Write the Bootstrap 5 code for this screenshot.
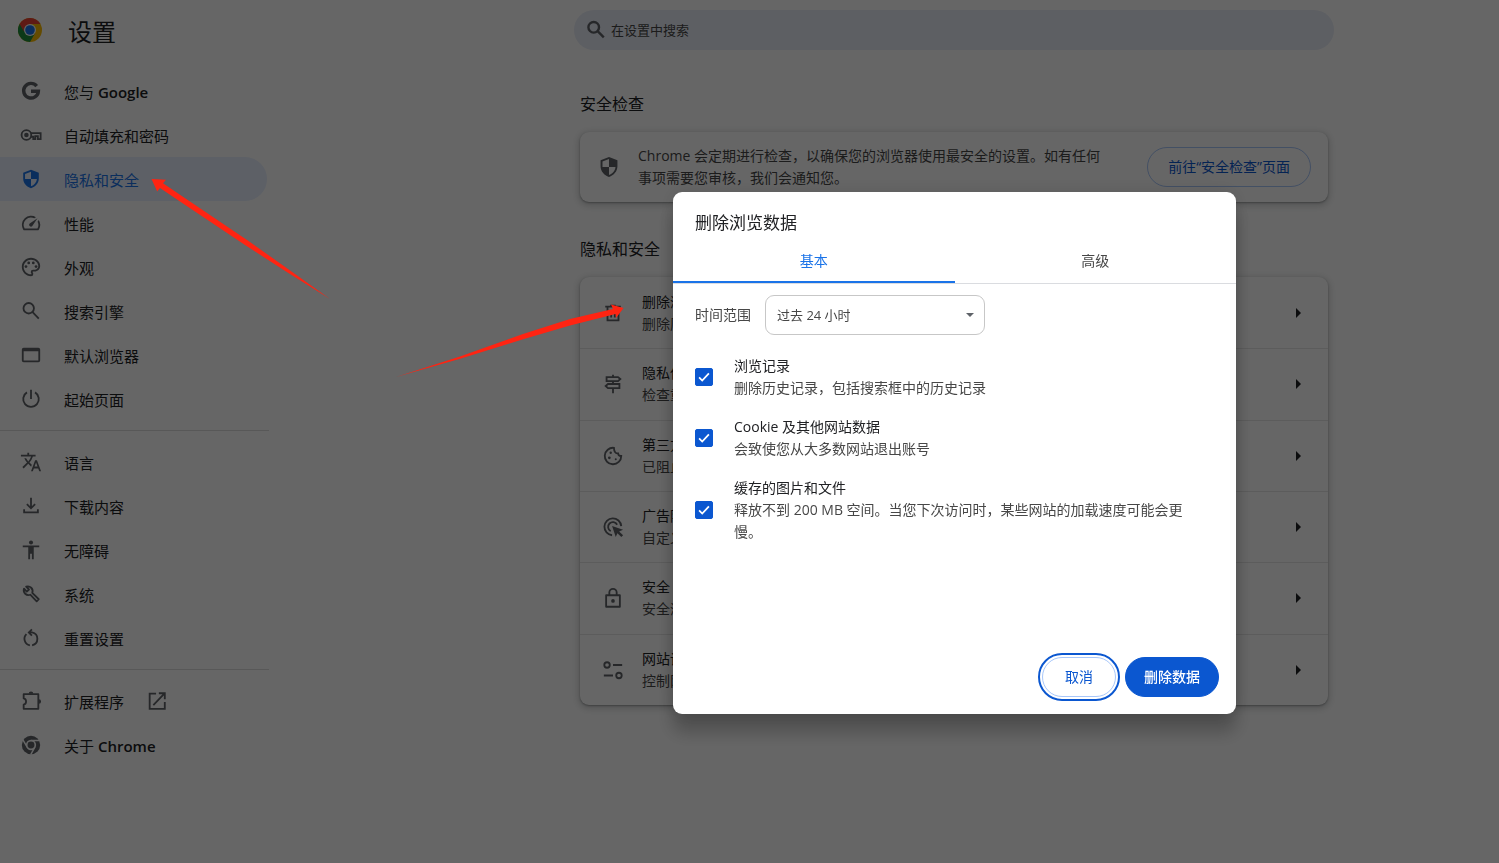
<!DOCTYPE html>
<html lang="zh-CN">
<head>
<meta charset="utf-8">
<meta name="viewport" content="width=device-width, initial-scale=1">
<title>设置 - 隐私和安全</title>
<link href="https://cdn.jsdelivr.net/npm/bootstrap@5.3.0/dist/css/bootstrap.min.css" rel="stylesheet">
<style>
  body { font-family: "Open Sans", "Noto Sans CJK SC", sans-serif; font-size: 14px; line-height: 22px; color: #202124; background: #fff; overflow: hidden; }
  svg.ico { width: 22px; height: 22px; flex: none; fill: #5f6368; stroke-width: 2; }
  .ln { fill: none; stroke: #5f6368; }
  .page-grid { display: grid; grid-template-columns: 270px 304fr 760fr 165fr; min-height: 100vh; }
  .page-grid main { grid-column: 3; }
  .brand-row { height: 60px; padding-left: 18px; gap: 26px; }
  .brand-row svg { width: 24px; height: 24px; }
  .brand-row h1 { font-size: 24px; line-height: 32px; padding-top: 4px; }
  .side-menu { padding-top: 9px; }
  .side-menu .nav-link { height: 44px; padding: 0 0 0 20px; gap: 22px; font-size: 15px; color: #202124; margin-right: 3px; }
  .side-menu .nav-link span { padding-top: 2px; }
  .side-menu .nav-link b { font-weight: 600; }
  .side-menu .nav-link.active { color: #1a73e8; background: #e8f0fe; border-radius: 0 22px 22px 0; }
  .side-menu .active svg { fill: #1a73e8; }
  .side-menu hr { margin: 9px 0; color: #000; opacity: .14; width: 269px; }
  .search-bar { height: 40px; margin-top: 10px; border-radius: 20px; background: #e9edf7; padding: 0 11px; gap: 4px; }
  .search-bar input { font-size: 13px; color: #474747; border: 0; background: none; outline: 0; flex: 1; padding: 0; }
  .search-bar input::placeholder { color: #474747; opacity: 1; }
  .sections { padding: 0 6px; }
  .sections h2 { font-size: 16px; line-height: 24px; margin: 0; padding-top: 42px; font-weight: 400; }
  .sections section + h2 { padding-top: 35px; }
  .panel-card { border-radius: 9px; background: #fff; box-shadow: 0 1px 2px rgba(60,64,67,.4), 0 2px 6px 2px rgba(60,64,67,.2); }
  .check-card { padding: 13px 17px 13px 18px; }
  .check-text { padding: 0 40px 0 18px; }
  .soft { color: #474747; }
  .pill-btn { height: 40px; border-radius: 20px; font-size: 14px; line-height: 22px; padding: 0 20px; color: #0b57d0; border: 1px solid #a8c7fa; background: #fff; white-space: nowrap; }
  .pill-btn.solid { background: #0b57d0; border-color: #0b57d0; color: #fff; font-weight: 500; padding: 0 18px; }
  .pill-btn.ringed { outline: 2px solid #0b57d0; outline-offset: 2px; padding: 0 22px; }
  .rows { display: grid; grid-auto-rows: 1fr; min-height: 428px; }
  .rows a { color: inherit; text-decoration: none; padding: 0 27px 0 22px; gap: 18px; white-space: nowrap; }
  .rows a + a { border-top: 1px solid #e6e6e6; }
  .caret-r { border: 5px solid transparent; border-left-color: #202124; border-right: 0; }
  .modal-backdrop.show { opacity: .6; }
  .modal.dlg-layer { display: grid; grid-template-columns: 673fr 563px 263fr; align-content: start; padding-top: 192px; }
  .dlg-layer .modal-dialog { grid-column: 2; margin: 0; max-width: none; width: auto; }
  .dlg-layer .modal-content { border: 0; border-radius: 9px; min-height: 522px; box-shadow: 0 0 18px rgba(0,0,0,.12), 0 18px 18px rgba(0,0,0,.24); color: #202124; }
  .dlg-title { font-size: 17px; line-height: 26px; padding: 18px 22px 0; margin: 0; font-weight: 400; }
  .dlg-tabs { border-bottom: 1px solid #dadce0; height: 48px; }
  .dlg-tabs button { border: 0; background: none; border-bottom: 2px solid transparent; color: #474747; padding: 4px 0 0; }
  .dlg-tabs button.on { color: #1a73e8; border-color: #1a73e8; }
  .dlg-body { padding: 11px 40px 0 22px; flex: 1; }
  .dlg-body .range-label { width: 70px; }
  .range-select { width: 220px; height: 40px; border-radius: 9px; border: 1px solid #c7c7c7; font-size: 13px; color: #474747; padding: 2px 12px 0 11px; background-size: 8px 4px; background-position: right 10px center;
    background-image: url("data:image/svg+xml,%3Csvg xmlns='http://www.w3.org/2000/svg' viewBox='0 0 8 4'%3E%3Cpath d='M0 0h8L4 4z' fill='%235f6368'/%3E%3C/svg%3E"); }
  .opts { padding-top: 20px; gap: 17px; }
  .opts .form-check-input { width: 18px; height: 18px; border-radius: 2px; margin: 0; flex: none; }
  .opts .form-check-input:checked { background-color: #0b57d0; border-color: #0b57d0;
    background-image: url("data:image/svg+xml,%3Csvg xmlns='http://www.w3.org/2000/svg' viewBox='0 0 18 18'%3E%3Cpath d='M3.500 9.500l3.500 3.500 7.500-8' fill='none' stroke='%23fff' stroke-width='2'/%3E%3C/svg%3E"); }
  .opts > div { gap: 21px; }
  .dlg-foot { padding: 0 17px 17px; gap: 9px; }
  .arrows { position: absolute; left: 0; top: 0; width: 680px; height: 400px; z-index: 1060; pointer-events: none; fill: #ff2412; }
</style>
</head>
<body>
<div class="page-grid">
  <aside>
    <header class="brand-row d-flex align-items-center">
      <svg viewBox="0 0 24 24"><circle cx="12" cy="12" r="12" fill="#fbbc04"/><path d="M1.600 6A12 12 0 0 0 12 24l5.200-9L12 12z" fill="#1e8e3e"/><path d="M1.600 6A12 12 0 0 1 22.400 6H12L6.500 9.500 5.800 13.200z" fill="#ea4335"/><circle cx="12" cy="12" r="6" fill="#fff"/><circle cx="12" cy="12" r="4.800" fill="#1a73e8"/></svg>
      <h1 class="m-0 fw-normal">设置</h1>
    </header>
    <nav class="side-menu nav flex-column flex-nowrap">
      <a class="nav-link d-flex align-items-center" href="#"><svg class="ico" viewBox="0 0 24 24"><path d="M18.200 6.600A8 8 0 1 0 20 12.300H12" fill="none" stroke="#5f6368" stroke-width="3.800"/></svg><span>您与 <b>Google</b></span></a>
      <a class="nav-link d-flex align-items-center" href="#"><svg class="ico" viewBox="0 0 24 24"><g class="ln"><circle cx="7" cy="12" r="5.300"/><path d="M12 10h10.500v6.500h-3v-3.300h-2.800v3.300h-2.200v-2.600H12"/></g><circle cx="7" cy="12" r="2.500"/></svg><span>自动填充和密码</span></a>
      <a class="nav-link active d-flex align-items-center" href="#" aria-current="page"><svg class="ico" viewBox="0 0 24 24"><path d="M12 2 3.500 5.200v6.300c0 5 3.600 9.200 8.500 10.500 4.900-1.300 8.500-5.500 8.500-10.500V5.200zM12 12h6.500c-.5 3.800-3 6.800-6.500 7.900V12H5.500V6.500L12 4.100z"/></svg><span>隐私和安全</span></a>
      <a class="nav-link d-flex align-items-center" href="#"><svg class="ico" viewBox="0 0 24 24"><path d="M20.400 8.600l-1.200 1.900a8 8 0 0 1-.2 7.500H5.100A8 8 0 0 1 15.600 6.900l1.800-1.300A10 10 0 0 0 3.400 19a2 2 0 0 0 1.700 1h13.900a2 2 0 0 0 1.700-1 10 10 0 0 0-.3-10.400zM10.600 15.400a2 2 0 0 0 2.800 0l5.700-8.500-8.500 5.700a2 2 0 0 0 0 2.800z"/></svg><span>性能</span></a>
      <a class="nav-link d-flex align-items-center" href="#"><svg class="ico" viewBox="0 0 24 24"><path d="M12 22C6.490 22 2 17.510 2 12S6.490 2 12 2s10 4.040 10 9c0 3.310-2.690 6-6 6h-1.770c-.28 0-.5.22-.5.5 0 .12.050.23.130.330.410.470.640 1.060.640 1.670A2.500 2.500 0 0 1 12 22zm0-18c-4.410 0-8 3.590-8 8s3.590 8 8 8c.28 0 .5-.22.5-.5a.54.54 0 0 0-.14-.35c-.41-.46-.63-1.050-.63-1.650a2.500 2.500 0 0 1 2.500-2.500H16c2.210 0 4-1.790 4-4 0-3.860-3.590-7-8-7z"/><circle cx="6.500" cy="11.500" r="1.500"/><circle cx="9.500" cy="7.500" r="1.500"/><circle cx="14.500" cy="7.500" r="1.500"/><circle cx="17.500" cy="11.500" r="1.500"/></svg><span>外观</span></a>
      <a class="nav-link d-flex align-items-center" href="#"><svg class="ico" viewBox="0 0 24 24"><g class="ln"><circle cx="9.500" cy="9" r="5.700"/><path d="M13.500 13l7 7.200"/></g></svg><span>搜索引擎</span></a>
      <a class="nav-link d-flex align-items-center" href="#"><svg class="ico" viewBox="0 0 24 24"><path d="M20 4H4a2 2 0 0 0-2 2v12a2 2 0 0 0 2 2h16a2 2 0 0 0 2-2V6a2 2 0 0 0-2-2zm0 14H4V8h16z"/></svg><span>默认浏览器</span></a>
      <a class="nav-link d-flex align-items-center" href="#"><svg class="ico" viewBox="0 0 24 24"><path class="ln" d="M12 2v10M7.600 4.800a8.500 8.500 0 1 0 8.800 0"/></svg><span>起始页面</span></a>
      <hr>
      <a class="nav-link d-flex align-items-center" href="#"><svg class="ico" viewBox="0 0 24 24"><path d="M12.870 15.070l-2.540-2.510.030-.030A17.520 17.520 0 0 0 14.070 6H17V4h-7V2H8v2H1v1.990h11.170C11.500 7.920 10.440 9.750 9 11.350 8.070 10.320 7.300 9.190 6.690 8h-2c.73 1.630 1.730 3.170 2.980 4.560l-5.090 5.020L4 19l5-5 3.110 3.110.76-2.040zM18.500 10h-2L12 22h2l1.120-3h4.750L21 22h2l-4.500-12zm-2.620 7l1.620-4.330L19.120 17h-3.240z"/></svg><span>语言</span></a>
      <a class="nav-link d-flex align-items-center" href="#"><svg class="ico" viewBox="0 0 24 24"><path class="ln" d="M12 3v11M7.500 10l4.500 4.500 4.500-4.500M4.500 15.500V19h15v-3.500"/></svg><span>下载内容</span></a>
      <a class="nav-link d-flex align-items-center" href="#"><svg class="ico" viewBox="0 0 24 24"><circle cx="12" cy="3.800" r="2.200"/><path d="M21 9h-6v13h-2v-6h-2v6H9V9H3V7h18z"/></svg><span>无障碍</span></a>
      <a class="nav-link d-flex align-items-center" href="#"><svg class="ico" viewBox="0 0 24 24"><path class="ln" stroke-linejoin="round" d="M4.400 6.200a5.200 5.200 0 0 0 6.800 6.600l7 7.200 2.300-2.300-7.100-7A5.200 5.200 0 0 0 6.700 4l3.100 3.100-2.400 2.300z"/></svg><span>系统</span></a>
      <a class="nav-link d-flex align-items-center" href="#"><svg class="ico" viewBox="0 0 24 24"><path class="ln" d="M13.200 20a7.200 7.200 0 0 0 0-14.100h-2.600M10.800 20A7.200 7.200 0 0 1 7 7.800M13 2.500L9.600 5.900l3.400 3.400"/></svg><span>重置设置</span></a>
      <hr>
      <a class="nav-link d-flex align-items-center" href="#"><svg class="ico" viewBox="0 0 24 24"><path class="ln" stroke-linejoin="round" d="M4 4.500h16v16H4v-4.500c3.500-.8 3.500-6 0-6.800z"/><path d="M9.500 4a2.500 2.500 0 0 1 5 0zM20.500 10a2.500 2.500 0 0 1 0 5z"/></svg><span>扩展程序</span><svg class="ico ms-n1" viewBox="0 0 24 24"><path class="ln" d="M11 4H4v16.500h16.500V13M14 3.500h6.500V10M20 4L8 16.500"/></svg></a>
      <a class="nav-link d-flex align-items-center" href="#"><svg class="ico" viewBox="0 0 24 24"><circle cx="12" cy="12" r="10"/><path d="M12 7.200h9.500M7.800 14.400L3.200 6.300M16.200 14.400l-4.500 8" stroke="#fff" stroke-width="1.600"/><circle cx="12" cy="12" r="4.700" stroke="#fff" stroke-width="1.800"/></svg><span>关于 <b>Chrome</b></span></a>
    </nav>
  </aside>

  <main>
    <div class="search-bar d-flex align-items-center">
      <svg class="ico" viewBox="0 0 24 24"><g class="ln" stroke-width="2.600"><circle cx="9.500" cy="9" r="5.800"/><path d="M13.500 13l7 7"/></g></svg>
      <input type="search" placeholder="在设置中搜索" aria-label="在设置中搜索">
    </div>
    <div class="sections">
      <h2 class="mb-3">安全检查</h2>
      <section class="panel-card check-card d-flex align-items-center">
        <svg class="ico" viewBox="0 0 24 24"><path d="M12 1 2.800 4.700v6.600c0 5.400 3.900 10 9.200 11.500 5.300-1.500 9.200-6.100 9.200-11.500V4.700zM12 12h7.100c-.5 4.200-3.300 7.500-7.100 8.700V12H4.900V6.100L12 3.300z"/></svg>
        <div class="soft flex-fill check-text">Chrome 会定期进行检查，以确保您的浏览器使用最安全的设置。如有任何事项需要您审核，我们会通知您。</div>
        <button type="button" class="pill-btn">前往“安全检查”页面</button>
      </section>
      <h2 class="mb-3">隐私和安全</h2>
      <section class="panel-card rows">
        <a class="d-flex align-items-center" href="#"><svg class="ico" viewBox="0 0 24 24"><path class="ln" d="M3.500 5h17M9 4h6M6 5v15h12V5M10 9v8M14 9v8"/></svg><div class="flex-fill"><div>删除浏</div><div class="soft">删除历</div></div><i class="caret-r"></i></a>
        <a class="d-flex align-items-center" href="#"><svg class="ico" viewBox="0 0 24 24"><path class="ln" d="M12 2v2M12 9v3M12 17v5M5 4.500h12.500L20 6.500l-2.500 2.300H5zM19 12H6.500L4 14.200l2.500 2.300H19z"/></svg><div class="flex-fill"><div>隐私保</div><div class="soft">检查重</div></div><i class="caret-r"></i></a>
        <a class="d-flex align-items-center" href="#"><svg class="ico" viewBox="0 0 24 24"><path class="ln" d="M13 3.100A9 9 0 1 0 21 12c-2 .1-3.300-.9-3.400-2.800-2.600.1-4.500-1.500-4.600-6.100z"/><circle cx="9.500" cy="8.500" r="1.300"/><circle cx="8" cy="14" r="1.500"/><circle cx="15" cy="15.500" r="1.100"/></svg><div class="flex-fill"><div>第三方</div><div class="soft">已阻止</div></div><i class="caret-r"></i></a>
        <a class="d-flex align-items-center" href="#"><svg class="ico" viewBox="0 0 24 24"><path class="ln" d="M11 21a9.200 9.200 0 1 1 10-10M9.500 16.500A5.200 5.200 0 1 1 16.500 9.500"/><path d="M11 11l12 4-4.300 1.800 4.300 4.300-1.900 1.900-4.300-4.300L15 23z"/></svg><div class="flex-fill"><div>广告隐</div><div class="soft">自定义</div></div><i class="caret-r"></i></a>
        <a class="d-flex align-items-center" href="#"><svg class="ico" viewBox="0 0 24 24"><path class="ln" stroke-linejoin="round" d="M4.500 9h15v12.500h-15zM8 9V6a4 4 0 0 1 8 0v3"/><circle cx="12" cy="15.200" r="2"/></svg><div class="flex-fill"><div>安全</div><div class="soft">安全浏</div></div><i class="caret-r"></i></a>
        <a class="d-flex align-items-center" href="#"><svg class="ico" viewBox="0 0 24 24"><g class="ln"><circle cx="5.500" cy="6.500" r="3"/><circle cx="18.500" cy="18" r="3"/><path d="M12 6.500h10M2 18h10"/></g></svg><div class="flex-fill"><div>网站设</div><div class="soft">控制网</div></div><i class="caret-r"></i></a>
      </section>
    </div>
  </main>
</div>

<div class="modal-backdrop show"></div>
<div class="modal dlg-layer" role="dialog" aria-modal="true" aria-labelledby="dlgTitle">
  <div class="modal-dialog">
    <div class="modal-content">
      <h2 class="dlg-title" id="dlgTitle">删除浏览数据</h2>
      <div class="dlg-tabs d-flex" role="tablist">
        <button type="button" class="on flex-fill w-50" role="tab" aria-selected="true">基本</button>
        <button type="button" class="flex-fill w-50" role="tab" aria-selected="false">高级</button>
      </div>
      <div class="dlg-body">
        <div class="d-flex align-items-center">
          <label for="range" class="soft range-label">时间范围</label>
          <select id="range" class="form-select range-select"><option>过去 24 小时</option></select>
        </div>
        <div class="opts d-flex flex-column">
          <div class="d-flex align-items-center">
            <input class="form-check-input" type="checkbox" id="c1" checked>
            <label for="c1">浏览记录<br><span class="soft">删除历史记录，包括搜索框中的历史记录</span></label>
          </div>
          <div class="d-flex align-items-center">
            <input class="form-check-input" type="checkbox" id="c2" checked>
            <label for="c2">Cookie 及其他网站数据<br><span class="soft">会致使您从大多数网站退出账号</span></label>
          </div>
          <div class="d-flex align-items-center">
            <input class="form-check-input" type="checkbox" id="c3" checked>
            <label for="c3">缓存的图片和文件<br><span class="soft">释放不到 200 MB 空间。当您下次访问时，某些网站的加载速度可能会更慢。</span></label>
          </div>
        </div>
      </div>
      <div class="dlg-foot d-flex justify-content-end">
        <button type="button" class="pill-btn ringed">取消</button>
        <button type="button" class="pill-btn solid">删除数据</button>
      </div>
    </div>
  </div>
</div>

<svg class="arrows" viewBox="0 0 680 400" aria-hidden="true">
  <path d="M151.500 179l14.500.8-3 3.400L187 199.500 248.500 241 288 269l42 30-44-27.500-41-26.500L180 201.500l-20-13.500-2.800 3.500z"/>
  <path d="M623.500 308l-12.500-3.500 2 4.500L570 319l-47 15-63 22.500L396 377l65-18.500 63-19.500 46-13.500 45.500-11.500.5 4z"/>
</svg>
<script src="https://cdn.jsdelivr.net/npm/bootstrap@5.3.0/dist/js/bootstrap.bundle.min.js"></script>
</body>
</html>
